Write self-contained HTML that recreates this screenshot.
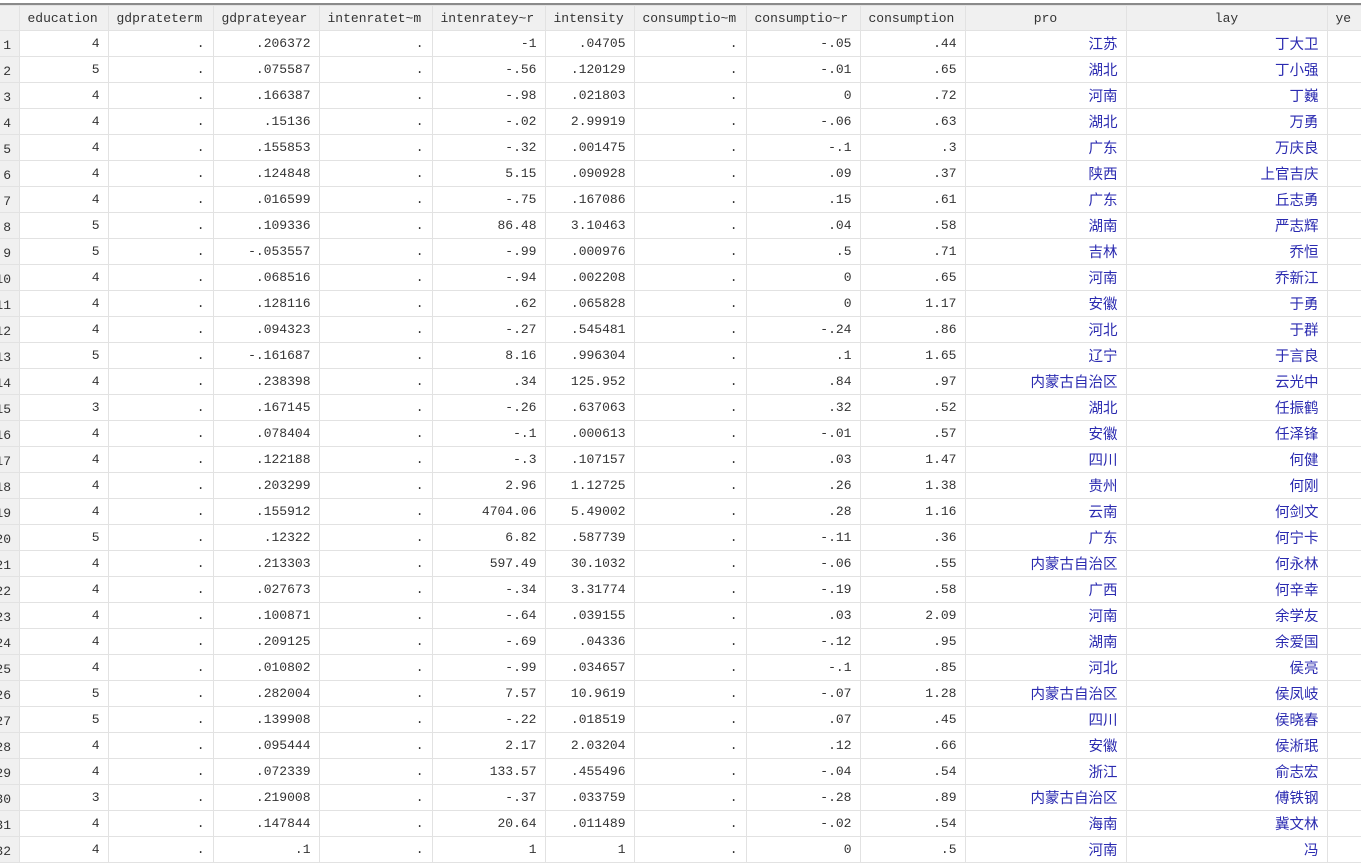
<!DOCTYPE html>
<html><head><meta charset="utf-8"><style>
body{margin:0;width:1361px;height:840px;overflow:hidden;background:#fff;position:relative}
.top{position:absolute;left:0;top:3px;width:1361px;height:2px;background:#8a8a8a}
table{position:absolute;left:0;top:5px;border-collapse:collapse;table-layout:fixed;width:1380px}
td,th{border:1px solid #e2e2e2;height:25px;padding:0 8px;font:13px "Liberation Mono",monospace;color:#333;text-align:right;white-space:nowrap;overflow:hidden}
th{background:#f0f0f0;font-weight:normal;text-align:left;height:24px}
th.c{text-align:center}
td.n{background:#f0f0f0;padding:0}
td.n div{width:19px;overflow:hidden;position:relative;height:20px}
td.n span{position:absolute;right:8px;top:4px}
td.z{font:14.5px "Liberation Sans","Noto Sans CJK SC",sans-serif;color:#2a2ab0}
tr td:first-child,tr th:first-child{border-left:none}
</style></head><body>
<div class="top"></div>
<table>
<colgroup><col style="width:19px"><col style="width:89px"><col style="width:105px"><col style="width:106px"><col style="width:113px"><col style="width:113px"><col style="width:89px"><col style="width:112px"><col style="width:114px"><col style="width:105px"><col style="width:161px"><col style="width:201px"><col style="width:60px"></colgroup>
<tr><th></th><th>education</th><th>gdprateterm</th><th>gdprateyear</th><th>intenratet~m</th><th>intenratey~r</th><th>intensity</th><th>consumptio~m</th><th>consumptio~r</th><th>consumption</th><th class="c">pro</th><th class="c">lay</th><th>ye</th></tr>
<tbody id="b"></tbody>
</table>
<script>
var d=[
[4,".206372","-1",".04705","-.05",".44","江苏","丁大卫"],
[5,".075587","-.56",".120129","-.01",".65","湖北","丁小强"],
[4,".166387","-.98",".021803","0",".72","河南","丁巍"],
[4,".15136","-.02","2.99919","-.06",".63","湖北","万勇"],
[4,".155853","-.32",".001475","-.1",".3","广东","万庆良"],
[4,".124848","5.15",".090928",".09",".37","陕西","上官吉庆"],
[4,".016599","-.75",".167086",".15",".61","广东","丘志勇"],
[5,".109336","86.48","3.10463",".04",".58","湖南","严志辉"],
[5,"-.053557","-.99",".000976",".5",".71","吉林","乔恒"],
[4,".068516","-.94",".002208","0",".65","河南","乔新江"],
[4,".128116",".62",".065828","0","1.17","安徽","于勇"],
[4,".094323","-.27",".545481","-.24",".86","河北","于群"],
[5,"-.161687","8.16",".996304",".1","1.65","辽宁","于言良"],
[4,".238398",".34","125.952",".84",".97","内蒙古自治区","云光中"],
[3,".167145","-.26",".637063",".32",".52","湖北","任振鹤"],
[4,".078404","-.1",".000613","-.01",".57","安徽","任泽锋"],
[4,".122188","-.3",".107157",".03","1.47","四川","何健"],
[4,".203299","2.96","1.12725",".26","1.38","贵州","何刚"],
[4,".155912","4704.06","5.49002",".28","1.16","云南","何剑文"],
[5,".12322","6.82",".587739","-.11",".36","广东","何宁卡"],
[4,".213303","597.49","30.1032","-.06",".55","内蒙古自治区","何永林"],
[4,".027673","-.34","3.31774","-.19",".58","广西","何辛幸"],
[4,".100871","-.64",".039155",".03","2.09","河南","余学友"],
[4,".209125","-.69",".04336","-.12",".95","湖南","余爱国"],
[4,".010802","-.99",".034657","-.1",".85","河北","侯亮"],
[5,".282004","7.57","10.9619","-.07","1.28","内蒙古自治区","侯凤岐"],
[5,".139908","-.22",".018519",".07",".45","四川","侯晓春"],
[4,".095444","2.17","2.03204",".12",".66","安徽","侯淅珉"],
[4,".072339","133.57",".455496","-.04",".54","浙江","俞志宏"],
[3,".219008","-.37",".033759","-.28",".89","内蒙古自治区","傅铁钢"],
[4,".147844","20.64",".011489","-.02",".54","海南","冀文林"],
[4,".1","1","1","0",".5","河南","冯"]];
var h="";d.forEach(function(r,i){h+="<tr><td class='n'><div><span>"+(i+1)+"</span></div></td><td>"+r[0]+"</td><td>.</td><td>"+r[1]+"</td><td>.</td><td>"+r[2]+"</td><td>"+r[3]+"</td><td>.</td><td>"+r[4]+"</td><td>"+r[5]+"</td><td class='z'>"+r[6]+"</td><td class='z'>"+r[7]+"</td><td></td></tr>";});
document.getElementById("b").innerHTML=h;
</script>
</body></html>
